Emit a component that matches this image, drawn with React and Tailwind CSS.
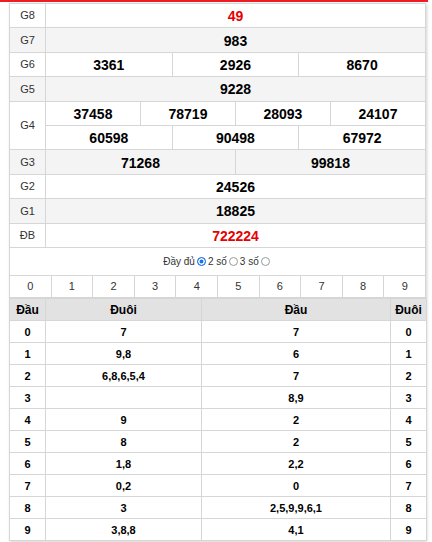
const prizes = [
  { label: "G8", rows: [["49"]], red: true },
  { label: "G7", rows: [["983"]] },
  { label: "G6", rows: [["3361", "2926", "8670"]] },
  { label: "G5", rows: [["9228"]] },
  { label: "G4", rows: [["37458", "78719", "28093", "24107"], ["60598", "90498", "67972"]] },
  { label: "G3", rows: [["71268", "99818"]] },
  { label: "G2", rows: [["24526"]] },
  { label: "G1", rows: [["18825"]] },
  { label: "ĐB", rows: [["722224"]], red: true },
];

const loto = [
  ["0", "7", "7", "0"],
  ["1", "9,8", "6", "1"],
  ["2", "6,8,6,5,4", "7", "2"],
  ["3", "", "8,9", "3"],
  ["4", "9", "2", "4"],
  ["5", "8", "2", "5"],
  ["6", "1,8", "2,2", "6"],
  ["7", "0,2", "0", "7"],
  ["8", "3", "2,5,9,9,6,1", "8"],
  ["9", "3,8,8", "4,1", "9"],
];

const span = { 1: 12, 2: 6, 3: 4, 4: 3 };

const Radio = ({ on }) =>
  on ? (
    <span className="inline-block w-[9px] h-[9px] rounded-full border border-[#1a73e8] bg-[#1a73e8] shadow-[inset_0_0_0_1.5px_white] align-[-1px] mx-[2px]" />
  ) : (
    <span className="inline-block w-[9px] h-[9px] rounded-full border border-[#999] bg-white align-[-1px] mx-[2px]" />
  );

export default function App() {
  return (
    <div className="min-h-screen bg-white font-['Liberation_Sans',Arial,sans-serif] text-black">
      <div className="h-[2px] w-[428px] bg-[#ee1c25]" />
      <div className="ml-[9px] mt-[1px] w-[417px] shadow-[1px_1px_3px_rgba(0,0,0,0.18)]">
        <table className="w-full table-fixed border-collapse">
          <colgroup>
            <col className="w-[36px]" />
            {Array.from({ length: 12 }).map((_, i) => (
              <col key={i} />
            ))}
          </colgroup>
          <tbody>
            {prizes.map((p, pi) =>
              p.rows.map((row, ri) => (
                <tr key={p.label + ri} className={pi % 2 ? "bg-[#f4f4f4]" : "bg-white"}>
                  {ri === 0 && (
                    <td
                      rowSpan={p.rows.length}
                      className="border border-[#d6d6d6] text-center text-[11px] text-[#333]"
                    >
                      {p.label}
                    </td>
                  )}
                  {row.map((n, i) => (
                    <td
                      key={i}
                      colSpan={span[row.length]}
                      className={
                        "h-[24.4px] pt-[2px] border border-[#d6d6d6] text-center text-[14px] font-bold " +
                        (p.red ? "text-[#e60000]" : "")
                      }
                    >
                      {n}
                    </td>
                  ))}
                </tr>
              ))
            )}
          </tbody>
        </table>

        <div className="flex h-[27px] items-center justify-center border-x border-[#d6d6d6] text-[10px] text-[#333]">
          Đầy đủ <Radio on /> 2 số <Radio /> 3 số <Radio />
        </div>

        <div className="grid grid-cols-10 border-t border-l border-[#d6d6d6]">
          {Array.from({ length: 10 }).map((_, i) => (
            <div
              key={i}
              className="flex h-[22px] items-center justify-center border-r border-b border-[#d6d6d6] text-[11px] text-[#333]"
            >
              {i}
            </div>
          ))}
        </div>

        <table className="w-full table-fixed border-collapse text-center font-bold">
          <colgroup>
            <col className="w-[36px]" />
            <col className="w-[156px]" />
            <col className="w-[189px]" />
            <col className="w-[36px]" />
          </colgroup>
          <thead>
            <tr className="bg-[#e2e2e2] text-[12px]">
              <th className="h-[22.5px] border border-[#d6d6d6]">Đầu</th>
              <th className="border border-[#d6d6d6]">Đuôi</th>
              <th className="border border-[#d6d6d6]">Đầu</th>
              <th className="border border-[#d6d6d6]">Đuôi</th>
            </tr>
          </thead>
          <tbody className="text-[11px]">
            {loto.map((r) => (
              <tr key={r[0]}>
                {r.map((c, i) => (
                  <td key={i} className="h-[22px] border border-[#d6d6d6]">
                    {c}
                  </td>
                ))}
              </tr>
            ))}
          </tbody>
        </table>
      </div>
    </div>
  );
}
